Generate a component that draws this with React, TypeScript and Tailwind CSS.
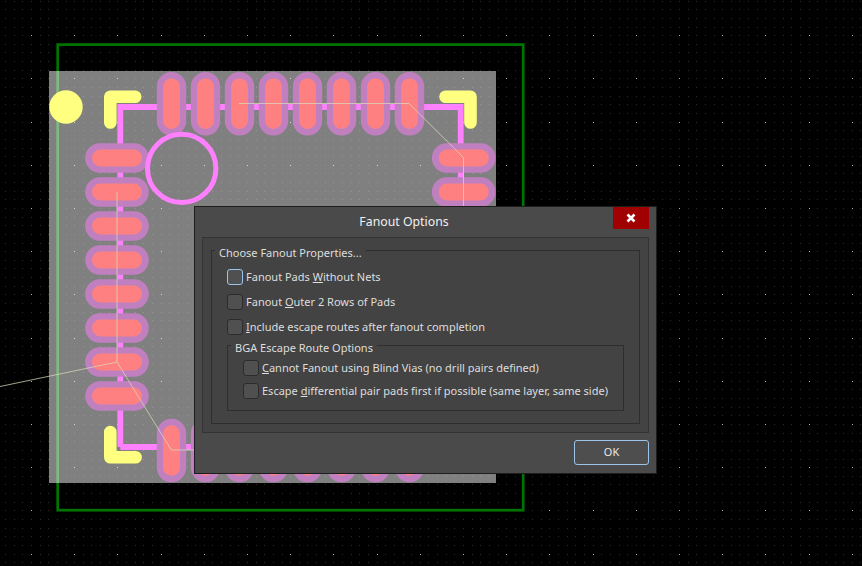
import React from "react";

const PITCH = 34;
const range = (start: number, n: number) => Array.from({ length: n }, (_, i) => start + i * PITCH);
const topX = range(171.5, 8);
const leftY = range(158, 8);
const rightY = range(158, 8);

function gridPath(major: boolean) {
  let d = "";
  for (let i = -5; i < 105; i++) {
    for (let j = -5; j < 70; j++) {
      const isMajor = i % 5 === 0 && j % 5 === 0;
      if (isMajor !== major) continue;
      const x = Math.round(31 + i * 8.64);
      const y = Math.round(35.2 + j * 8.64);
      d += `M${x} ${y}h1v1h-1z`;
    }
  }
  return d;
}

function VPad({ x, y }: { x: number; y: number }) {
  return (
    <g>
      <rect x={x - 14.7} y={y - 31.8} width={29.4} height={63.6} rx={14.7} fill="#c080c0" />
      <rect x={x - 8.4} y={y - 25.3} width={16.8} height={50.6} rx={8.4} fill="#ff8080" />
    </g>
  );
}

function HPad({ x, y }: { x: number; y: number }) {
  return (
    <g>
      <rect x={x - 31.8} y={y - 14.7} width={63.6} height={29.4} rx={14.7} fill="#c080c0" />
      <rect x={x - 25} y={y - 8.4} width={50} height={16.8} rx={8.4} fill="#ff8080" />
    </g>
  );
}

function PcbDrawing() {
  return (
    <svg className="absolute left-0 top-0" width={862} height={566} viewBox="0 0 862 566">
      <path d={gridPath(false)} fill="#2c2c2c" shapeRendering="crispEdges" />
      <path d={gridPath(true)} fill="#b4b4b4" shapeRendering="crispEdges" />
      <rect x={57.7} y={44.6} width={465.5} height={465.6} fill="none" stroke="#007400" strokeWidth={2.7} />
      <rect x={49} y={71} width={447} height={412} fill="#ffffff" fillOpacity={0.5} />
      <path
        d="M120.3 447V107H460.7V230M120.3 447H300"
        fill="none"
        stroke="#ff80ff"
        strokeWidth={5.8}
      />
      {topX.map((x) => (
        <VPad key={`t${x}`} x={x} y={103.7} />
      ))}
      {topX.map((x) => (
        <VPad key={`b${x}`} x={x} y={450.5} />
      ))}
      {leftY.map((y) => (
        <HPad key={`l${y}`} x={117} y={y} />
      ))}
      {rightY.map((y) => (
        <HPad key={`r${y}`} x={463.7} y={y} />
      ))}
      <circle cx={181.7} cy={168.4} r={34.2} fill="none" stroke="#ff80ff" strokeWidth={5} />
      <g fill="none" stroke="#ffff80" strokeWidth={12.6} strokeLinecap="round" strokeLinejoin="round">
        <path d="M110.3 122.5V96.8H135.2" />
        <path d="M445.5 96.8H470.5V122.5" />
        <path d="M110.3 432V457.3H135.6" />
      </g>
      <circle cx={66} cy={107} r={16.7} fill="#ffff80" />
      <g fill="none" stroke="#d8d8b8" strokeOpacity={0.75} strokeWidth={1}>
        <path d="M239 103.5H409L463.5 157.5V230" />
        <path d="M117 192V362L0 386.5" />
        <path d="M117 362L171.3 450H240" />
      </g>
    </svg>
  );
}

function Check({ focused, label }: { focused?: boolean; label: React.ReactNode }) {
  return (
    <label className="flex items-center gap-[3px] h-[16px]">
      <span
        className={
          focused
            ? "w-[16px] h-[16px] rounded-[3px] border border-[#9cc4ea] bg-[#505050] shrink-0"
            : "w-[16px] h-[16px] rounded-[3px] border border-[#2c2c2c] bg-[#505050] shrink-0"
        }
      />
      <span className="whitespace-nowrap">{label}</span>
    </label>
  );
}

export default function App() {
  return (
    <div className="relative w-[862px] h-[566px] bg-black overflow-hidden font-['Noto_Sans',sans-serif]">
      <PcbDrawing />
      <div className="absolute left-[194px] top-[206px] w-[463px] h-[268px] border border-[#1e1e1e] bg-[#4a4a4a] text-[#dedede] text-[11px] flex flex-col">
        <div className="flex items-start h-[30px] shrink-0">
          <div className="flex-1 text-center text-[#f0f0f0] text-[12.3px] leading-[30px]">Fanout Options</div>
          <button className="mr-[7px] w-[36px] h-[22px] bg-[#a00000] flex items-center justify-center">
            <svg width="10" height="10" viewBox="0 0 10 10">
              <path d="M1.5 1.5L8.5 8.5M8.5 1.5L1.5 8.5" stroke="#ffffff" strokeWidth="2.6" />
            </svg>
          </button>
        </div>
        <div className="mx-[7px] h-[196px] border border-[#333333] bg-[#434343] px-[8px] pt-[5px] shrink-0">
          <fieldset className="border border-[#2e2e2e] h-[181px] pl-[15px] pr-[15px]">
            <legend className="-ml-[12px] px-[4px] leading-[14px] text-[#dedede]">
              <span className="relative top-[3px]">Choose Fanout Properties...</span>
            </legend>
            <div className="flex flex-col gap-[9px] mt-[12px]">
              <Check focused label={<>Fanout Pads <span className="underline">W</span>ithout Nets</>} />
              <Check label={<>Fanout <span className="underline">O</span>uter 2 Rows of Pads</>} />
              <Check label={<><span className="underline">I</span>nclude escape routes after fanout completion</>} />
            </div>
            <fieldset className="border border-[#2e2e2e] h-[73px] mt-[3px] pl-[15px]">
              <legend className="-ml-[12px] px-[4px] leading-[14px]">
                <span className="relative top-[3px]">BGA Escape Route Options</span>
              </legend>
              <div className="flex flex-col gap-[7px] mt-[8px]">
                <Check label={<><span className="underline">C</span>annot Fanout using Blind Vias (no drill pairs defined)</>} />
                <Check label={<>Escape <span className="underline">d</span>ifferential pair pads first if possible (same layer, same side)</>} />
              </div>
            </fieldset>
          </fieldset>
        </div>
        <div className="flex justify-end mt-[7px] mr-[7px]">
          <button className="w-[75px] h-[25px] rounded-[3px] border border-[#9cc4ea] bg-[#4e4e4e] text-[#e8e8e8] text-[11px]">OK</button>
        </div>
      </div>
    </div>
  );
}
